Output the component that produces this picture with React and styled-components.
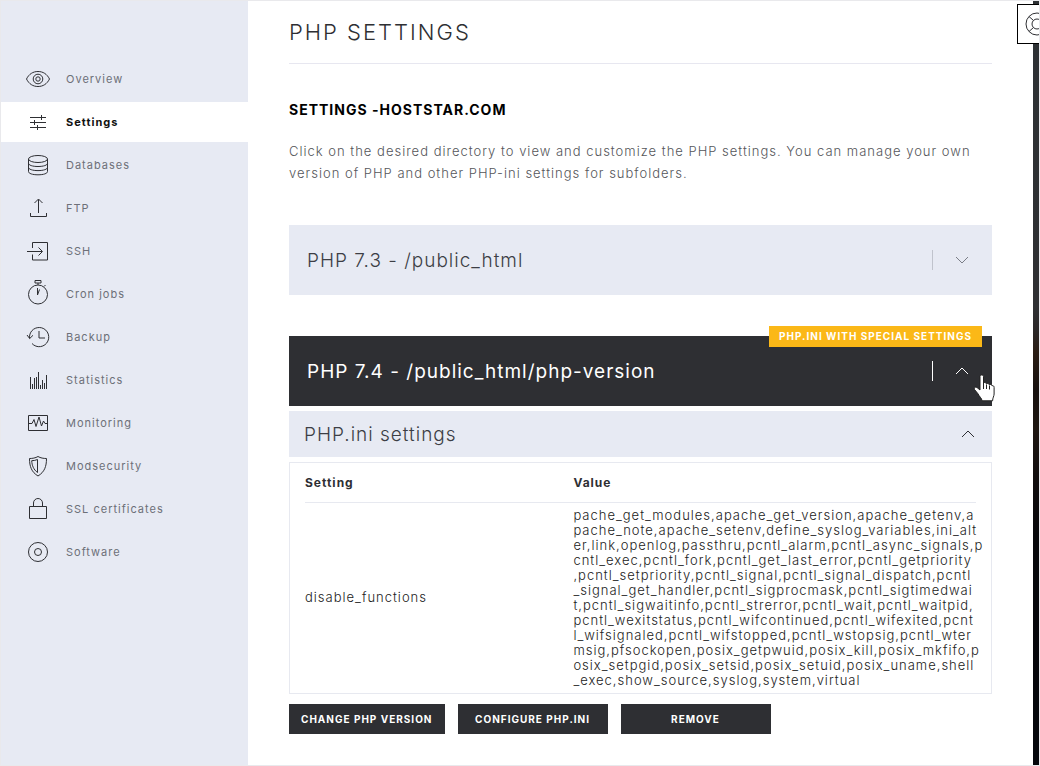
import React, { Component } from 'react';
import styled, { createGlobalStyle } from 'styled-components';

const GlobalStyle = createGlobalStyle`
  * { box-sizing: border-box; }
  body {
    margin: 0;
    background: #fff;
    color: #2e2f33;
    font-family: Inter, "Liberation Sans", sans-serif;
  }
  h1, h2, p, ul { margin: 0; padding: 0; }
`;

const Page = styled.div`
  display: flex;
  min-height: 100vh;
  overflow: hidden;
  border: 1px solid #e9e9ec;
`;

const Sidebar = styled.nav`
  flex: 0 0 247px;
  padding-top: 58px;
  background: #e7eaf3;
`;

const Menu = styled.ul`
  display: grid;
  gap: 3px;
  list-style: none;
`;

const MenuLink = styled.a`
  display: flex;
  align-items: center;
  gap: 16px;
  height: 40px;
  padding-left: 25px;
  font-size: 11px;
  letter-spacing: 1px;
  text-decoration: none;
  font-weight: ${props => (props.$active ? 700 : 400)};
  color: ${props => (props.$active ? '#111' : '#6d7078')};
  background: ${props => (props.$active ? '#fff' : 'transparent')};
`;

const Icon = styled.svg`
  flex: none;
  fill: none;
  stroke: #2e2f33;
  stroke-width: 1;
`;

const Main = styled.main`
  flex: 1;
  min-width: 0;
  padding: 0 41px 31px;
`;

const Title = styled.h1`
  height: 63px;
  border-bottom: 1px solid #e7e7f0;
  font-size: 22px;
  font-weight: 300;
  line-height: 62px;
  letter-spacing: 2px;
`;

const Subtitle = styled.h2`
  padding: 36px 0 21px;
  font-size: 14px;
  font-weight: 700;
  line-height: 19px;
  letter-spacing: 1px;
  color: #000;
`;

const Intro = styled.p`
  margin-bottom: 41px;
  font-size: 13px;
  font-weight: 300;
  line-height: 22px;
  letter-spacing: 1px;
  color: #55565a;
`;

const Directory = styled.div`
  position: relative;
  margin-bottom: ${props => (props.$open ? 5 : 41)}px;
`;

const DirectoryButton = styled.button`
  display: flex;
  align-items: center;
  width: 100%;
  height: 70px;
  padding: 0 23px 0 18px;
  border: 0;
  font: inherit;
  font-size: 19px;
  font-weight: ${props => (props.$open ? 400 : 300)};
  letter-spacing: 1px;
  text-align: left;
  color: ${props => (props.$open ? '#fff' : '#3c3e45')};
  background: ${props => (props.$open ? '#2e2f33' : '#e7eaf3')};
  svg { stroke: ${props => (props.$open ? '#fff' : '#7a7d86')}; }
`;

const Label = styled.span`
  flex: 1;
`;

const Divider = styled.span`
  width: 1px;
  height: 20px;
  margin-right: 22px;
  background: ${props => (props.$open ? '#fff' : '#c0c3cc')};
`;

const Badge = styled.span`
  position: absolute;
  top: -10px;
  right: 10px;
  padding: 0 10px;
  font-size: 10px;
  font-weight: 700;
  line-height: 21px;
  letter-spacing: 1px;
  color: #fff;
  background: #fbb817;
`;

const Pointer = styled.svg`
  position: absolute;
  top: 38px;
  right: -3px;
`;

const SectionButton = styled.button`
  display: flex;
  align-items: center;
  width: 100%;
  height: 46px;
  margin-bottom: 5px;
  padding: 0 17px 0 15px;
  border: 0;
  font: inherit;
  font-size: 19px;
  font-weight: 300;
  letter-spacing: 1px;
  text-align: left;
  color: #3c3e45;
  background: #e7eaf3;
`;

const TableBox = styled.div`
  margin-bottom: 10px;
  padding: 0 15px;
  border: 1px solid #e7e9f0;
`;

const Table = styled.table`
  width: 100%;
  border-collapse: collapse;
  table-layout: fixed;
  font-size: 13px;
  line-height: 15px;
  letter-spacing: 1px;
  text-align: left;
  th {
    height: 39px;
    padding: 0;
    border-bottom: 1px solid #e7e9f0;
    font-size: 12px;
    font-weight: 700;
  }
  th:first-child { width: 40%; }
  td {
    padding: 5px 0;
    font-weight: 300;
    color: #222;
    white-space: nowrap;
  }
`;

const ValueLine = styled.span`
  display: block;
`;

const Actions = styled.div`
  display: flex;
  gap: 13px;
`;

const ActionButton = styled.button`
  min-width: 150px;
  height: 30px;
  padding: 0 12px;
  border: 0;
  font: inherit;
  font-size: 10px;
  font-weight: 700;
  letter-spacing: 1px;
  color: #fff;
  background: #2e2f33;
`;

// edge of the photo behind the page
const Backdrop = styled.aside`
  position: relative;
  flex: 0 0 6px;
  background: linear-gradient(#2d3134 0, #2f3033 40%, #2b2828 43%, #2a1d14 46%, #17110f 51%, #1f1712 56%, #120e0e 62%, #08080b 70%, #05070c 100%);
`;

const HelpButton = styled.button`
  position: absolute;
  top: 3px;
  left: -16px;
  width: 40px;
  height: 40px;
  padding: 0 0 0 7px;
  border: 1px solid #000;
  background: #fff;
  svg { display: block; }
`;

const items = [
  { name: 'Overview', icon: <><path d="M.5 12C3 7 7 4.500 12 4.500S21 7 23.500 12C21 17 17 19.500 12 19.500S3 17 .5 12z" /><circle cx="12" cy="12" r="4.800" /><circle cx="12" cy="12" r="2.200" /></> },
  { name: 'Settings', active: true, icon: <path d="M4 7.500h16M4 12.500h16M4 17.500h16M15.500 5v5M8.500 10v5M11.500 15v5" /> },
  { name: 'Databases', icon: <><ellipse cx="12" cy="6" rx="9.500" ry="3.500" /><path d="M2.500 6v12.500c0 2 4 3.300 9.500 3.300s9.500-1.300 9.500-3.300V6M2.500 10.200c0 2 4 3.300 9.500 3.300s9.500-1.300 9.500-3.300M2.500 14.300c0 2 4 3.300 9.500 3.300s9.500-1.300 9.500-3.300" /></> },
  { name: 'FTP', icon: <path d="M4.500 17v3.500h16V17M12.500 17V3.500M8.500 7l4-4 4 4" /> },
  { name: 'SSH', icon: <path d="M6.500 9V3.500h15v17.500h-15V15.500M1 12.500h15M12.500 8.500l4 4-4 4" /> },
  { name: 'Cron jobs', icon: <><circle cx="12" cy="12.500" r="9.500" /><path d="M9 -1.500h6v2.500H9zM12 1v2M18 4.500l1.500-1.500M11.500 6v7M11.500 13l2-5.500" /></> },
  { name: 'Backup', icon: <path d="M3.500 13.500C3 7 7.500 2.500 13.300 2.500a9.600 9.600 0 1 1-7.300 16M1 10l2.700 3.500L7 10.300M13 6v7h6" /> },
  { name: 'Statistics', icon: <path d="M4.500 9v12M6.500 16v5M8.500 10v11M10.500 9v12M12.500 4v17M14.500 17v4M16.500 12v9M18.500 15v6M20.500 7v14" /> },
  { name: 'Monitoring', icon: <path d="M2.500 4.500h19v15h-19zM3 12.500h3l2-4 2 7 3-9.500 2.500 9 2-5 1.500 2.500h2.500" /> },
  { name: 'Modsecurity', icon: <path d="M12 2.500c2.500 1.500 5.500 2 8.500 2 0 8-2 13.500-8.500 17.500C5.500 18 3.500 12.500 3.500 4.500c3 0 6-.5 8.500-2zM11.500 5.500v13C7.500 15.500 6 11.500 5.700 6.700c2 0 4-.4 5.800-1.200z" /> },
  { name: 'SSL certificates', icon: <path d="M3.500 9.500h17v12h-17zM7.500 9.500V6a4.500 4.500 0 0 1 9 0v3.500" /> },
  { name: 'Software', icon: <><circle cx="12" cy="12" r="9.500" /><circle cx="12" cy="12" r="3.500" /></> },
];

const disabledFunctions = [
  'pache_get_modules,apache_get_version,apache_getenv,a',
  'pache_note,apache_setenv,define_syslog_variables,ini_alt',
  'er,link,openlog,passthru,pcntl_alarm,pcntl_async_signals,p',
  'cntl_exec,pcntl_fork,pcntl_get_last_error,pcntl_getpriority',
  ',pcntl_setpriority,pcntl_signal,pcntl_signal_dispatch,pcntl',
  '_signal_get_handler,pcntl_sigprocmask,pcntl_sigtimedwai',
  't,pcntl_sigwaitinfo,pcntl_strerror,pcntl_wait,pcntl_waitpid,',
  'pcntl_wexitstatus,pcntl_wifcontinued,pcntl_wifexited,pcnt',
  'l_wifsignaled,pcntl_wifstopped,pcntl_wstopsig,pcntl_wter',
  'msig,pfsockopen,posix_getpwuid,posix_kill,posix_mkfifo,p',
  'osix_setpgid,posix_setsid,posix_setuid,posix_uname,shell',
  '_exec,show_source,syslog,system,virtual',
];

const Chevron = ({ up }) => (
  <Icon width="14" height="8" viewBox="0 0 14 8" aria-hidden="true">
    <path d={up ? 'M1 7l6-6 6 6' : 'M1 1l6 6 6-6'} />
  </Icon>
);

class App extends Component {
  render() {
    return (
      <Page>
        <GlobalStyle />
        <Sidebar>
          <Menu>
            {items.map(el => (
              <li key={el.name}>
                <MenuLink href="#" $active={el.active}>
                  <Icon width="24" height="24" viewBox="0 0 24 24" overflow="visible" aria-hidden="true">{el.icon}</Icon>
                  {el.name}
                </MenuLink>
              </li>
            ))}
          </Menu>
        </Sidebar>
        <Main>
          <Title>PHP SETTINGS</Title>
          <Subtitle>SETTINGS -HOSTSTAR.COM</Subtitle>
          <Intro>
            Click on the desired directory to view and customize the PHP settings. You can manage your own<br />
            version of PHP and other PHP-ini settings for subfolders.
          </Intro>
          <Directory>
            <DirectoryButton>
              <Label>PHP 7.3 - /public_html</Label>
              <Divider />
              <Chevron />
            </DirectoryButton>
          </Directory>
          <Directory $open>
            <DirectoryButton $open>
              <Label>PHP 7.4 - /public_html/php-version</Label>
              <Divider $open />
              <Chevron up />
            </DirectoryButton>
            <Badge>PHP.INI WITH SPECIAL SETTINGS</Badge>
            <Pointer width="22" height="30" viewBox="0 0 22 30" aria-hidden="true">
              <path d="M7 2.500c0-2 3.500-2 3.500 0v6.500c1-1 2.500-.5 3 .8 1-.8 2.400-.3 2.800.9 1-.6 2.400-.2 2.800 1 1.300-.3 2 .5 2 1.800v6.500c0 2-1.500 4-1.500 6.800H9c0-2.500-3-4.500-4-7L1.500 15.500c-.8-2 1-3.200 2.500-2l3 2.500z" fill="#fff" stroke="#222" />
              <path d="M10.500 9v6M13.500 10.500v4.500M16.500 11.500v4" stroke="#222" fill="none" />
            </Pointer>
          </Directory>
          <SectionButton>
            <Label>PHP.ini settings</Label>
            <Chevron up />
          </SectionButton>
          <TableBox>
            <Table>
              <thead>
                <tr><th>Setting</th><th>Value</th></tr>
              </thead>
              <tbody>
                <tr>
                  <td>disable_functions</td>
                  <td>{disabledFunctions.map(line => <ValueLine key={line}>{line}</ValueLine>)}</td>
                </tr>
              </tbody>
            </Table>
          </TableBox>
          <Actions>
            <ActionButton>CHANGE PHP VERSION</ActionButton>
            <ActionButton>CONFIGURE PHP.INI</ActionButton>
            <ActionButton>REMOVE</ActionButton>
          </Actions>
        </Main>
        <Backdrop>
          <HelpButton aria-label="Help">
            <Icon width="24" height="24" viewBox="0 0 24 24" aria-hidden="true">
              <circle cx="12" cy="12" r="11" />
              <circle cx="12" cy="12" r="5" />
              <path d="M4 4.500l4.500 4M4 19.500l4.500-4M20 4.500l-4.500 4M20 19.500l-4.500-4" />
            </Icon>
          </HelpButton>
        </Backdrop>
      </Page>
    );
  }
}

export default App;
